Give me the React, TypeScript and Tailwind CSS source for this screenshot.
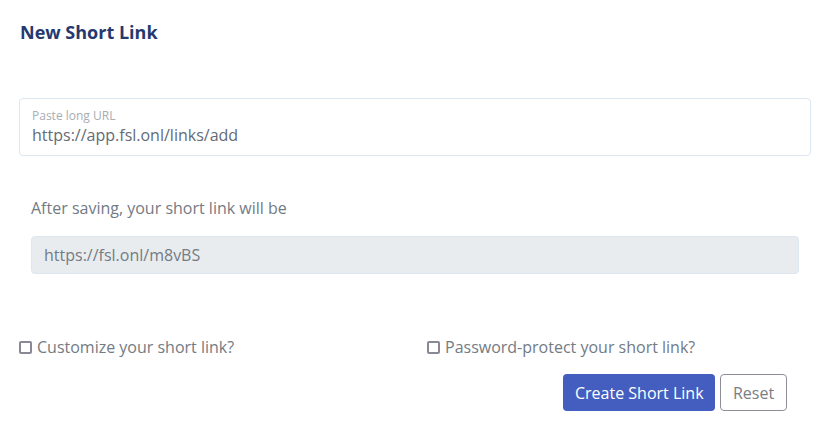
import React from "react";

export default function App() {
  return (
    <div className="w-[830px] h-[432px] bg-white px-[19px] pt-[19px]" style={{ fontFamily: "'Open Sans', 'Noto Sans', sans-serif" }}>
      <h1 className="text-[18px] font-bold text-[#25396f] leading-[24px] pl-[1px] pt-[1px]">New Short Link</h1>
      <div className="mt-[54px] h-[58px] border border-[#dce7f1] rounded-[4px] px-[12px] pt-[10px]">
        <div className="text-[12px] leading-[14px] text-[#a7adb3]">Paste long URL</div>
        <div className="text-[16px] leading-[22px] text-[#636b77] mt-[1px]">https://app.fsl.onl/links/add</div>
      </div>
      <div className="px-[12px]">
        <div className="mt-[40px] text-[16px] leading-[24px] text-[#737b84]">After saving, your short link will be</div>
        <div className="mt-[16px] h-[38px] bg-[#e9ecef] border border-[#dce7f1] rounded-[4px] px-[12px] flex items-center text-[16px] text-[#737b84]">
          https://fsl.onl/m8vBS
        </div>
      </div>
      <div className="mt-[61px] grid grid-cols-2 gap-6">
        <label className="flex items-center gap-[5px] text-[16px] leading-[24px] text-[#737b84]">
          <span className="w-[13px] h-[13px] border-2 border-[#8a8895] rounded-[2px] shrink-0" />
          Customize your short link?
        </label>
        <label className="flex items-center gap-[5px] text-[16px] leading-[24px] text-[#737b84]">
          <span className="w-[13px] h-[13px] border-2 border-[#8a8895] rounded-[2px] shrink-0" />
          Password-protect your short link?
        </label>
      </div>
      <div className="mt-[15px] flex justify-end gap-[5px] pr-[24px]">
        <button className="h-[37px] px-[12px] bg-[#435ebe] text-white text-[16px] rounded-[4px] w-[152px] whitespace-nowrap">Create Short Link</button>
        <button className="h-[37px] w-[67px] border border-[#8b8f95] text-[#7a7d82] text-[16px] rounded-[4px]">Reset</button>
      </div>
    </div>
  );
}
